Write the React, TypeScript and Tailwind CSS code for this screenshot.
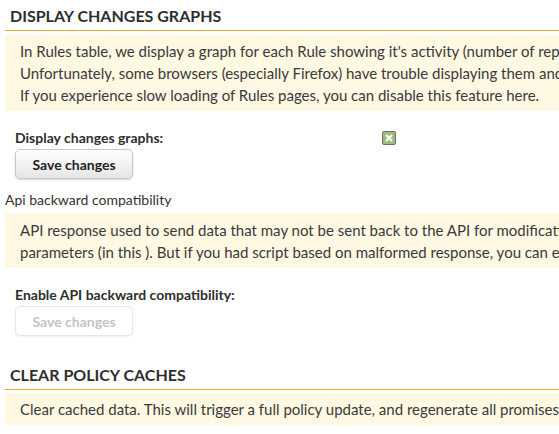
import React from 'react';

const font = { fontFamily: 'Lato, "Open Sans", sans-serif' };

function SectionTitle({ children }: { children: React.ReactNode }) {
  return (
    <h2 className="ml-[5px] border-b border-[#eea236] pl-[5px] pb-[4px] text-[16px] font-bold uppercase leading-[20px] text-[#2e2e2e]">
      {children}
    </h2>
  );
}

function Note({ lines, className = '' }: { lines: string[]; className?: string }) {
  return (
    <div className={`ml-[5px] bg-[#fff8e2] px-[15px] py-[5px] text-[15px] leading-[22px] text-[#3a3a3a] whitespace-nowrap ${className}`}>
      {lines.map((l) => (
        <div key={l}>{l}</div>
      ))}
    </div>
  );
}

function SaveButton({ disabled }: { disabled?: boolean }) {
  return disabled ? (
    <button disabled className="h-[30px] w-[118px] rounded-[5px] border border-[#e6e6e6] bg-white text-[14px] font-bold text-[#c4c4c4] shadow-[0_1px_2px_rgba(0,0,0,0.06)]">
      Save changes
    </button>
  ) : (
    <button className="h-[30px] w-[118px] rounded-[5px] border border-[#c8c8c8] bg-gradient-to-b from-white to-[#e6e6e6] text-[14px] font-bold text-[#222] shadow-[0_1px_2px_rgba(0,0,0,0.18)]">
      Save changes
    </button>
  );
}

export default function App() {
  return (
    <div className="h-[434px] w-[559px] overflow-hidden bg-white pt-[6px]" style={font}>
      <SectionTitle>Display changes graphs</SectionTitle>
      <Note
        className="mt-[4px]"
        lines={[
          "In Rules table, we display a graph for each Rule showing it's activity (number of repaired and failed promises).",
          'Unfortunately, some browsers (especially Firefox) have trouble displaying them and can become slow.',
          'If you experience slow loading of Rules pages, you can disable this feature here.',
        ]}
      />

      <div className="mt-[18px] pl-[15px]">
        <div className="flex items-center">
          <span className="w-[367px] text-[14px] font-bold leading-[18px] text-[#2e2e2e]">Display changes graphs:</span>
          <span className="flex h-[14px] w-[14px] items-center justify-center rounded-[2px] border border-[#6f6f6f] bg-[#9dbf7e]">
            <svg width="8" height="8" viewBox="0 0 8 8">
              <path d="M1 1L7 7M7 1L1 7" stroke="white" strokeWidth="2" />
            </svg>
          </span>
        </div>
        <div className="mt-[2px]">
          <SaveButton />
        </div>
      </div>

      <div className="mt-[12px] pl-[5px] text-[14px] leading-[18px] text-[#333]">Api backward compatibility</div>
      <Note
        className="mt-[5px]"
        lines={[
          'API response used to send data that may not be sent back to the API for modification (ex: default values for',
          "parameters (in this ). But if you had script based on malformed response, you can enable compatibility here.",
        ]}
      />

      <div className="mt-[18px] pl-[15px]">
        <div className="text-[14px] font-bold leading-[18px] text-[#2e2e2e]">Enable API backward compatibility:</div>
        <div className="mt-[2px]">
          <SaveButton disabled />
        </div>
      </div>

      <div className="mt-[29px]">
        <SectionTitle>Clear policy caches</SectionTitle>
        <Note
          className="mt-[3px]"
          lines={['Clear cached data. This will trigger a full policy update, and regenerate all promises files.']}
        />
      </div>
    </div>
  );
}
